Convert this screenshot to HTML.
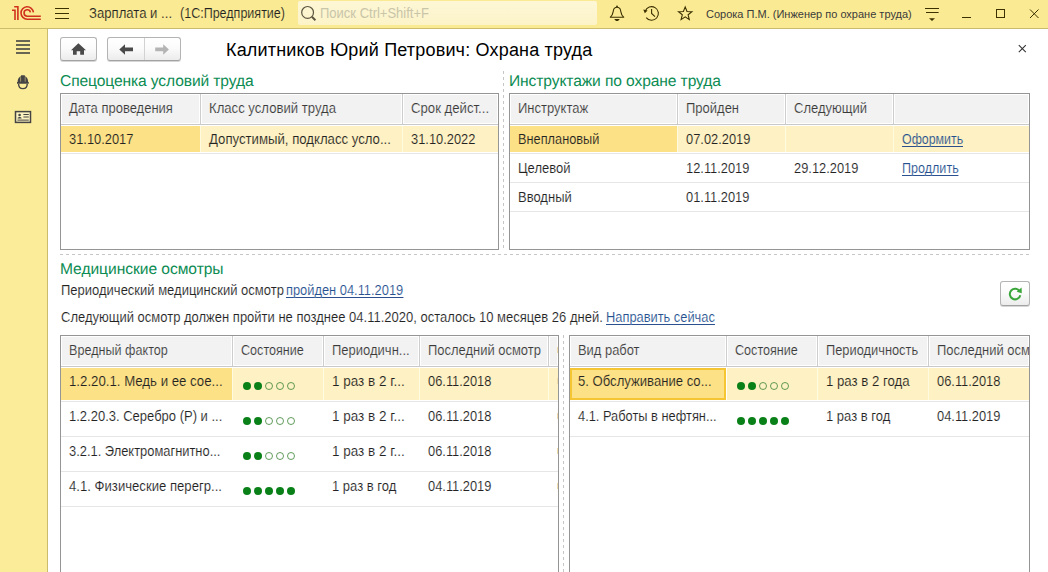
<!DOCTYPE html>
<html lang="ru">
<head>
<meta charset="utf-8">
<title>Охрана труда</title>
<style>
*{box-sizing:border-box;margin:0;padding:0}
html,body{width:1048px;height:572px;overflow:hidden;background:#fff;font-family:"Liberation Sans",sans-serif;font-size:13.8px;color:#222;-webkit-text-stroke:.14px #fff}
#topbar{position:absolute;left:0;top:0;width:1048px;height:29px;background:#fbea94;border-bottom:1px solid #cbbb6c}
#sidebar{position:absolute;left:0;top:29px;width:48px;height:543px;background:#fbec99;border-right:1px solid #cbbb6c}
.t{position:absolute;white-space:nowrap;line-height:16px;height:16px}
.tb{-webkit-text-stroke-color:#fbea94}
.sec{position:absolute;white-space:nowrap;font-size:15.6px;color:#0c8c53;-webkit-text-stroke-width:0;line-height:18px;height:18px;text-rendering:geometricPrecision}
.tbl{position:absolute;border:1px solid #959595;background:#fff;overflow:hidden}
.hd{position:absolute;left:0;top:0;right:0;height:31px;background:#f2f2f2;border-bottom:1px solid #c9c9c9}
.hc{position:absolute;top:0;height:30px;border-right:1px solid #cdcdcd;box-shadow:inset 1px 1px 0 #fff,inset -1px -1px 0 #fff;padding:7px 0 0 8px;white-space:nowrap;overflow:hidden;color:#3a3a3a;-webkit-text-stroke-color:#f2f2f2;line-height:16px}
.row{position:absolute;left:0;right:0;border-bottom:1px solid #e6e6e6}
.c{position:absolute;top:0;bottom:0;padding:7px 0 0 8px;white-space:nowrap;overflow:hidden;line-height:16px}
.sel .c{top:1px;bottom:1px;padding-top:6px;background:#fef1c4;-webkit-text-stroke-color:#fef1c4;border-right:1px solid #fffbe0}
.sel .c.cur{background:#fde187;-webkit-text-stroke-color:#fde187}
.sel .c.foc{border:2px solid #f6c534;padding:4px 0 0 6px;background:#fde187;-webkit-text-stroke-color:#fde187}
a{color:#24508f;text-decoration:none;display:inline-block;height:16px;line-height:16px;vertical-align:top;background:linear-gradient(#2a5090,#2a5090) 0 14px/100% 1px no-repeat}
.btn{position:absolute;border:1px solid #b4b4b4;border-bottom-color:#a2a2a2;border-radius:3px;background:linear-gradient(#ffffff 0%,#fbfbfb 45%,#ececec 100%);box-shadow:0 1px 0 rgba(0,0,0,.16)}
.dots{position:absolute;left:10px;top:15px;height:8px;width:60px}
.sel .dots{top:14px}
.dots i{position:absolute;top:0;width:8px;height:8px;border-radius:50%;background:#0a8018}
.dots i.e{background:transparent;border:1px solid rgba(40,120,35,.72)}
.vd{position:absolute;width:1px;background:repeating-linear-gradient(to bottom,#c6c6c6 0,#c6c6c6 3px,transparent 3px,transparent 6px)}
.hdl{position:absolute;height:1px;background:repeating-linear-gradient(to right,#c6c6c6 0,#c6c6c6 3px,transparent 3px,transparent 6px)}
svg{position:absolute;overflow:visible}
</style>
</head>
<body>
<div id="topbar"></div><div id="sidebar"></div>
<div class="t tb" style="left:89px;top:6px"><span style="display:inline-block;transform-origin:0 0;transform:scaleX(0.9514)">Зарплата и ...</span></div>
<div class="t tb" style="left:180px;top:6px"><span style="display:inline-block;transform-origin:0 0;transform:scaleX(0.9076)">(1С:Предприятие)</span></div>
<div style="position:absolute;left:298px;top:1px;width:299px;height:24px;background:linear-gradient(#fdf7d6,#fcf3c8);border-radius:2px"></div>
<div class="t" style="left:320px;top:6px;color:#c9c5a9;-webkit-text-stroke:0"><span style="display:inline-block;transform-origin:0 0;transform:scaleX(0.9423)">Поиск Ctrl+Shift+F</span></div>
<div class="t tb" style="left:706px;top:6px;font-size:11px;-webkit-text-stroke-width:0;color:#3a3a3a"><span style="letter-spacing:0px">Сорока П.М. (Инженер по охране труда)</span></div>
<div class="btn" style="left:60px;top:37px;width:37px;height:24px"></div>
<div class="btn" style="left:107px;top:37px;width:74px;height:24px"></div>
<div style="position:absolute;left:144px;top:38px;width:1px;height:22px;background:#d2d2d2"></div>
<div class="t" style="left:226px;top:38px;font-size:18px;line-height:24px;height:24px;color:#000;-webkit-text-stroke-width:0"><span style="letter-spacing:0.18px">Калитников Юрий Петрович: Охрана труда</span></div>
<div class="sec" style="left:60px;top:73px"><span style="letter-spacing:-0.111px">Спецоценка условий труда</span></div>
<div class="sec" style="left:509px;top:73px"><span style="letter-spacing:-0.102px">Инструктажи по охране труда</span></div>
<div class="sec" style="left:60px;top:261px"><span style="letter-spacing:-0.049px">Медицинские осмотры</span></div>
<div class="vd" style="left:503px;top:71px;height:180px"></div>
<div class="hdl" style="left:60px;top:254px;width:970px"></div>
<div class="vd" style="left:563px;top:335px;height:237px"></div>
<div class="tbl" style="left:60px;top:93px;width:439px;height:157px">
<div class="hd">
<div class="hc" style="left:0px;width:140px"><span style="display:inline-block;transform-origin:0 0;transform:scaleX(0.9422)">Дата проведения</span></div>
<div class="hc" style="left:140px;width:202px"><span style="display:inline-block;transform-origin:0 0;transform:scaleX(0.9512)">Класс условий труда</span></div>
<div class="hc" style="left:342px;width:95px;border-right:0"><span style="display:inline-block;transform-origin:0 0;transform:scaleX(0.9544)">Срок дейст...</span></div>
</div>
<div class="row sel" style="top:31px;height:29px">
<div class="c cur" style="left:0px;width:140px"><span style="display:inline-block;transform-origin:0 0;transform:scaleX(0.9321)">31.10.2017</span></div>
<div class="c" style="left:140px;width:202px"><span style="display:inline-block;transform-origin:0 0;transform:scaleX(0.9548)">Допустимый, подкласс усло...</span></div>
<div class="c" style="left:342px;width:95px;border-right:0"><span style="display:inline-block;transform-origin:0 0;transform:scaleX(0.9321)">31.10.2022</span></div>
</div>
</div>
<div class="tbl" style="left:509px;top:93px;width:521px;height:157px">
<div class="hd">
<div class="hc" style="left:0px;width:168px"><span style="display:inline-block;transform-origin:0 0;transform:scaleX(0.9423)">Инструктаж</span></div>
<div class="hc" style="left:168px;width:108px"><span style="display:inline-block;transform-origin:0 0;transform:scaleX(0.9420)">Пройден</span></div>
<div class="hc" style="left:276px;width:108px"><span style="display:inline-block;transform-origin:0 0;transform:scaleX(0.9423)">Следующий</span></div>
<div class="hc" style="left:384px;width:135px;border-right:0"></div>
</div>
<div class="row sel" style="top:31px;height:29px">
<div class="c cur" style="left:0px;width:168px"><span style="display:inline-block;transform-origin:0 0;transform:scaleX(0.9261)">Внеплановый</span></div>
<div class="c" style="left:168px;width:108px"><span style="display:inline-block;transform-origin:0 0;transform:scaleX(0.9321)">07.02.2019</span></div>
<div class="c" style="left:276px;width:108px"></div>
<div class="c" style="left:384px;width:135px;border-right:0"><a style="display:inline-block;transform-origin:0 0;transform:scaleX(0.8975)">Оформить</a></div>
</div>
<div class="row" style="top:60px;height:29px">
<div class="c" style="left:0px;width:168px"><span style="display:inline-block;transform-origin:0 0;transform:scaleX(0.9422)">Целевой</span></div>
<div class="c" style="left:168px;width:108px"><span style="display:inline-block;transform-origin:0 0;transform:scaleX(0.9320)">12.11.2019</span></div>
<div class="c" style="left:276px;width:108px"><span style="display:inline-block;transform-origin:0 0;transform:scaleX(0.9321)">29.12.2019</span></div>
<div class="c" style="left:384px;width:135px"><a style="display:inline-block;transform-origin:0 0;transform:scaleX(0.9102)">Продлить</a></div>
</div>
<div class="row" style="top:89px;height:29px">
<div class="c" style="left:0px;width:168px"><span style="display:inline-block;transform-origin:0 0;transform:scaleX(0.9422)">Вводный</span></div>
<div class="c" style="left:168px;width:108px"><span style="display:inline-block;transform-origin:0 0;transform:scaleX(0.9320)">01.11.2019</span></div>
<div class="c" style="left:276px;width:108px"></div>
<div class="c" style="left:384px;width:135px"></div>
</div>
</div>
<div class="t" style="left:61px;top:283px"><span style="display:inline-block;transform-origin:0 0;transform:scaleX(0.9422)">Периодический медицинский осмотр</span></div>
<div class="t" style="left:286px;top:283px"><a style="display:inline-block;transform-origin:0 0;transform:scaleX(0.9323)">пройден 04.11.2019</a></div>
<div class="t" style="left:61px;top:310px"><span style="display:inline-block;transform-origin:0 0;transform:scaleX(0.9423)">Следующий осмотр должен пройти не позднее 04.11.2020, осталось 10 месяцев 26 дней.</span></div>
<div class="t" style="left:606px;top:310px"><a style="display:inline-block;transform-origin:0 0;transform:scaleX(0.9313)">Направить сейчас</a></div>
<div class="btn" style="left:1000px;top:281px;width:30px;height:25px"></div>
<div class="tbl" style="left:60px;top:335px;width:499px;height:250px">
<div class="hd">
<div class="hc" style="left:0px;width:172px"><span style="display:inline-block;transform-origin:0 0;transform:scaleX(0.9143)">Вредный фактор</span></div>
<div class="hc" style="left:172px;width:91px"><span style="display:inline-block;transform-origin:0 0;transform:scaleX(0.9133)">Состояние</span></div>
<div class="hc" style="left:263px;width:96px"><span style="display:inline-block;transform-origin:0 0;transform:scaleX(0.9424)">Периодичн...</span></div>
<div class="hc" style="left:359px;width:129px"><span style="display:inline-block;transform-origin:0 0;transform:scaleX(0.9390)">Последний осмотр</span></div>
<div class="hc" style="left:488px;width:9px;border-right:0"></div>
</div>
<div class="row sel" style="top:31px;height:35px">
<div class="c cur" style="left:0px;width:172px"><span style="display:inline-block;transform-origin:0 0;transform:scaleX(0.9585)">1.2.20.1. Медь и ее сое...</span></div>
<div class="c" style="left:172px;width:91px;padding:0"><span class="dots"><i style="left:0px"></i><i style="left:11px"></i><i class="e" style="left:22px"></i><i class="e" style="left:33px"></i><i class="e" style="left:44px"></i></span></div>
<div class="c" style="left:263px;width:96px"><span style="display:inline-block;transform-origin:0 0;transform:scaleX(0.9775)">1 раз в 2 г...</span></div>
<div class="c" style="left:359px;width:129px"><span style="display:inline-block;transform-origin:0 0;transform:scaleX(0.9320)">06.11.2018</span></div>
<div class="c" style="left:488px;width:9px;border-right:0"></div>
</div>
<div class="row" style="top:66px;height:35px">
<div class="c" style="left:0px;width:172px"><span style="display:inline-block;transform-origin:0 0;transform:scaleX(0.9422)">1.2.20.3. Серебро (Р) и ...</span></div>
<div class="c" style="left:172px;width:91px;padding:0"><span class="dots"><i style="left:0px"></i><i style="left:11px"></i><i class="e" style="left:22px"></i><i class="e" style="left:33px"></i><i class="e" style="left:44px"></i></span></div>
<div class="c" style="left:263px;width:96px"><span style="display:inline-block;transform-origin:0 0;transform:scaleX(0.9775)">1 раз в 2 г...</span></div>
<div class="c" style="left:359px;width:129px"><span style="display:inline-block;transform-origin:0 0;transform:scaleX(0.9320)">06.11.2018</span></div>
<div class="c" style="left:488px;width:9px"></div>
</div>
<div class="row" style="top:101px;height:35px">
<div class="c" style="left:0px;width:172px"><span style="display:inline-block;transform-origin:0 0;transform:scaleX(0.9345)">3.2.1. Электромагнитно...</span></div>
<div class="c" style="left:172px;width:91px;padding:0"><span class="dots"><i style="left:0px"></i><i style="left:11px"></i><i class="e" style="left:22px"></i><i class="e" style="left:33px"></i><i class="e" style="left:44px"></i></span></div>
<div class="c" style="left:263px;width:96px"><span style="display:inline-block;transform-origin:0 0;transform:scaleX(0.9775)">1 раз в 2 г...</span></div>
<div class="c" style="left:359px;width:129px"><span style="display:inline-block;transform-origin:0 0;transform:scaleX(0.9320)">06.11.2018</span></div>
<div class="c" style="left:488px;width:9px"></div>
</div>
<div class="row" style="top:136px;height:35px">
<div class="c" style="left:0px;width:172px"><span style="display:inline-block;transform-origin:0 0;transform:scaleX(0.9516)">4.1. Физические перегр...</span></div>
<div class="c" style="left:172px;width:91px;padding:0"><span class="dots"><i style="left:0px"></i><i style="left:11px"></i><i style="left:22px"></i><i style="left:33px"></i><i style="left:44px"></i></span></div>
<div class="c" style="left:263px;width:96px"><span style="display:inline-block;transform-origin:0 0;transform:scaleX(0.9422)">1 раз в год</span></div>
<div class="c" style="left:359px;width:129px"><span style="display:inline-block;transform-origin:0 0;transform:scaleX(0.9320)">04.11.2019</span></div>
<div class="c" style="left:488px;width:9px"></div>
</div>
</div>
<div class="tbl" style="left:569px;top:335px;width:461px;height:250px">
<div class="hd">
<div class="hc" style="left:0px;width:157px"><span style="display:inline-block;transform-origin:0 0;transform:scaleX(0.9362)">Вид работ</span></div>
<div class="hc" style="left:157px;width:91px"><span style="display:inline-block;transform-origin:0 0;transform:scaleX(0.9133)">Состояние</span></div>
<div class="hc" style="left:248px;width:111px"><span style="display:inline-block;transform-origin:0 0;transform:scaleX(0.9305)">Периодичность</span></div>
<div class="hc" style="left:359px;width:100px;border-right:0"><span style="display:inline-block;transform-origin:0 0;transform:scaleX(0.9390)">Последний осмотр</span></div>
</div>
<div class="row sel" style="top:31px;height:35px">
<div class="c foc" style="left:0px;width:156px"><span style="display:inline-block;transform-origin:0 0;transform:scaleX(0.9494)">5. Обслуживание со...</span></div>
<div class="c" style="left:157px;width:91px;padding:0"><span class="dots"><i style="left:0px"></i><i style="left:11px"></i><i class="e" style="left:22px"></i><i class="e" style="left:33px"></i><i class="e" style="left:44px"></i></span></div>
<div class="c" style="left:248px;width:111px"><span style="display:inline-block;transform-origin:0 0;transform:scaleX(0.9567)">1 раз в 2 года</span></div>
<div class="c" style="left:359px;width:100px;border-right:0"><span style="display:inline-block;transform-origin:0 0;transform:scaleX(0.9320)">06.11.2018</span></div>
</div>
<div class="row" style="top:66px;height:35px">
<div class="c" style="left:0px;width:157px"><span style="display:inline-block;transform-origin:0 0;transform:scaleX(0.9302)">4.1. Работы в нефтян...</span></div>
<div class="c" style="left:157px;width:91px;padding:0"><span class="dots"><i style="left:0px"></i><i style="left:11px"></i><i style="left:22px"></i><i style="left:33px"></i><i style="left:44px"></i></span></div>
<div class="c" style="left:248px;width:111px"><span style="display:inline-block;transform-origin:0 0;transform:scaleX(0.9422)">1 раз в год</span></div>
<div class="c" style="left:359px;width:100px"><span style="display:inline-block;transform-origin:0 0;transform:scaleX(0.9320)">04.11.2019</span></div>
</div>
</div>
<div style="position:absolute;left:557px;top:347px;width:1px;height:6px;background:#f1dba6"></div><div style="position:absolute;left:557px;top:378px;width:1px;height:6px;background:#f1dba6"></div><div style="position:absolute;left:557px;top:413px;width:1px;height:6px;background:#f1dba6"></div><div style="position:absolute;left:557px;top:448px;width:1px;height:6px;background:#f1dba6"></div><div style="position:absolute;left:557px;top:483px;width:1px;height:6px;background:#f1dba6"></div>
<!-- icons -->
<svg width="1048" height="29" style="left:0;top:0" viewBox="0 0 1048 29">
  <!-- 1C logo -->
  <g fill="none" stroke="#d0311d" stroke-width="1.6" stroke-linejoin="miter">
    <path d="M12 10.2 H15 V20"/>
    <path d="M14.2 6.8 H17.9 V20"/>
    <path d="M33.4 12.4 A6.2 6.2 0 1 0 27.2 19.2 H40.8"/>
    <path d="M30.4 12.4 A3.2 3.2 0 1 0 27.2 16.2 H40.8"/>
  </g>
  <!-- hamburger -->
  <g fill="#3a3000"><rect x="55" y="8" width="14" height="1"/><rect x="55" y="13" width="14" height="1"/><rect x="55" y="18" width="14" height="1"/></g>
  <!-- search -->
  <g fill="none" stroke="#5c5540" stroke-width="1.2"><circle cx="307.6" cy="12.4" r="5.9"/><path d="M311.9 16.8 L315.4 20.2" stroke-width="2"/></g>
  <!-- bell -->
  <g fill="none" stroke="#3a3000" stroke-width="1.1" stroke-linejoin="round">
    <path d="M610.3 17.3 H623.7 C621.2 15.5 621 12.5 620.6 10.5 C620.2 8.3 618.6 7.3 617 7.3 C615.4 7.3 613.8 8.3 613.4 10.5 C613 12.5 612.8 15.5 610.3 17.3 Z"/>
  </g>
  <circle cx="617" cy="6.5" r=".9" fill="#3a3000"/>
  <path d="M614.4 19 H619.6 C619 20.6 618 21 617 21 C616 21 615 20.6 614.4 19 Z" fill="#3a3000"/>
  <!-- history -->
  <g fill="none" stroke="#3a3000" stroke-width="1.1">
    <path d="M645.2 11.2 A6.8 6.8 0 1 1 646.2 17.6"/>
    <path d="M651.6 9 V13.4 L655 16.6"/>
  </g>
  <path d="M643.3 9.6 L647.6 10.4 L644.8 13.2 Z" fill="#3a3000"/>
  <!-- star -->
  <polygon points="685.2,6.9 687.0,11.5 691.9,11.7 688.1,14.8 689.3,19.6 685.2,16.9 681.1,19.6 682.3,14.8 678.5,11.7 683.4,11.5" fill="none" stroke="#3a3000" stroke-width="1.1" stroke-linejoin="miter"/>
  <!-- menu -->
  <g fill="#3a3000"><rect x="925" y="8" width="14" height="1"/><rect x="926" y="12" width="12.6" height="1"/><path d="M929 18.2 H935 L932 21 Z"/></g>
  <!-- window controls -->
  <rect x="962" y="17" width="9" height="1" fill="#3a3000"/>
  <rect x="996.5" y="9.5" width="8" height="8" fill="none" stroke="#3a3000" stroke-width="1"/>
  <path d="M1030 9.5 L1038.5 18 M1038.5 9.5 L1030 18" stroke="#3a3000" stroke-width="1" fill="none"/>
</svg>
<svg width="48" height="140" style="left:0;top:29px" viewBox="0 29 48 140">
  <g fill="#444"><rect x="16" y="40.2" width="14" height="1.6"/><rect x="16" y="44.2" width="14" height="1.6"/><rect x="16" y="48.2" width="14" height="1.6"/><rect x="16" y="52.2" width="14" height="1.6"/></g>
  <!-- helmet -->
  <path d="M17 83.8 V82 H17.6 C17.6 79 19 77 21 76.3 V75.2 H24.8 V76.3 C26.8 77 28.2 79 28.2 82 H28.8 V83.8 Z" fill="#444"/>
  <path d="M20.6 77.2 V81.6 M25.2 77.2 V81.6" stroke="#b9ad78" stroke-width=".8" fill="none"/>
  <path d="M18.6 84 C18.6 87 20.6 88.6 22.9 88.6 C25.2 88.6 27.2 87 27.2 84" fill="none" stroke="#444" stroke-width="1.4"/>
  <!-- card -->
  <rect x="15.5" y="111.6" width="15" height="10.8" fill="#fdf3c0" stroke="#444" stroke-width="1.5"/>
  <g fill="#444"><circle cx="19.6" cy="115" r="1.3"/><path d="M17.6 118.4 C17.6 116.4 21.6 116.4 21.6 118.4 Z"/><rect x="23.4" y="114" width="5.4" height="1"/><rect x="23.4" y="116.5" width="5.4" height="1"/><rect x="17.4" y="119.6" width="11.4" height="1"/></g>
</svg>
<svg width="200" height="40" style="left:56px;top:32px" viewBox="56 32 200 40">
  <path d="M78.4 43.2 L86 50.2 H84 V54.8 H80.2 V51.2 H76.7 V54.8 H73 V50.2 H71 Z" fill="#4a4a4a"/>
  <path d="M119.3 49.4 L125 44.2 V47.6 H133 V51.2 H125 V54.7 Z" fill="#4a4a4a"/>
  <path d="M168.9 49.4 L163.2 44.2 V47.6 H155.2 V51.2 H163.2 V54.7 Z" fill="#b4b4b4"/>
</svg>
<svg width="20" height="20" style="left:1012px;top:40px" viewBox="1012 40 20 20"><path d="M1018.8 45.2 L1025.8 52.2 M1025.8 45.2 L1018.8 52.2" stroke="#333" stroke-width="1.1" fill="none"/></svg>
<svg width="30" height="26" style="left:1000px;top:281px" viewBox="1000 281 30 26">
  <path d="M1019.6 291.2 A5.3 5.3 0 1 0 1020.3 295.2" fill="none" stroke="#3aa53a" stroke-width="2"/>
  <path d="M1016.6 291.8 L1021.6 287.4 L1021.8 293.2 Z" fill="#3aa53a"/>
</svg>

</body>
</html>
